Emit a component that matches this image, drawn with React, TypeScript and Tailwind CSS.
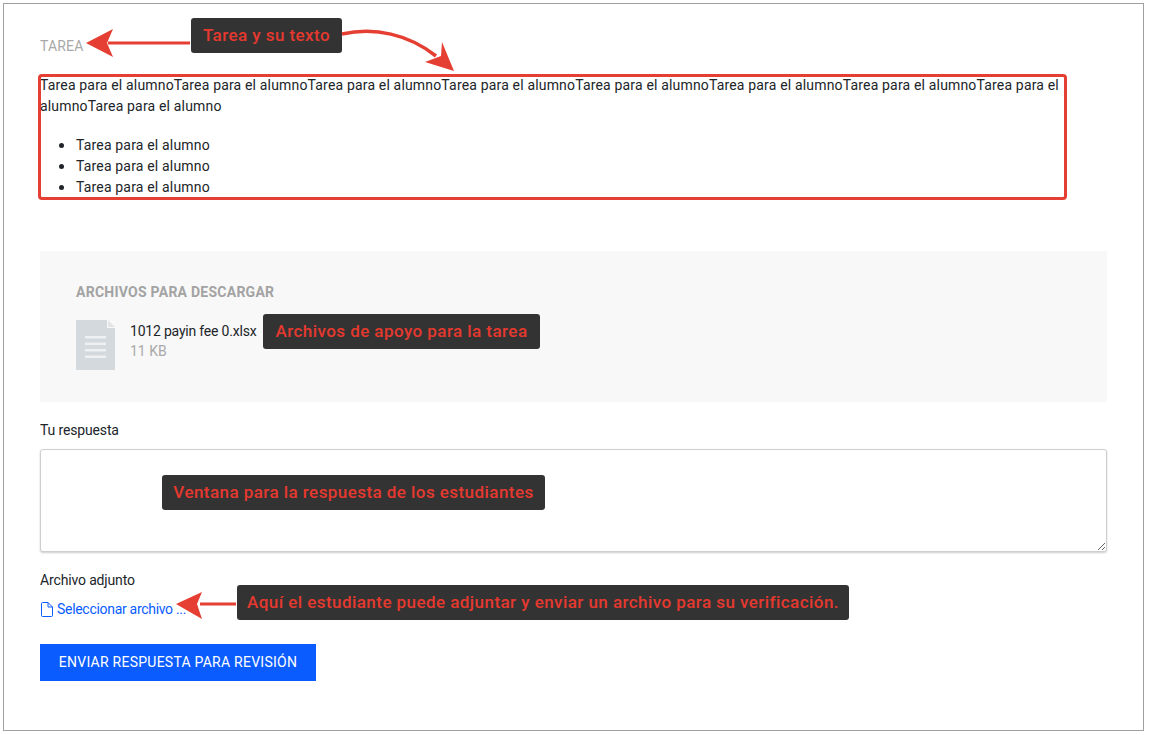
export default function App() {
  const items = ['Tarea para el alumno', 'Tarea para el alumno', 'Tarea para el alumno']

  return (
    <div className="relative h-[735px] w-[1149px] overflow-hidden bg-white pt-[3px] pl-[3px] font-['Roboto',sans-serif] text-[14px] leading-[21px] tracking-[0.17px] text-[#212529]">
      <div className="flex h-[728px] w-[1141px] flex-col border border-[#a0a0a0] px-[36px] pt-[32px]">
        {/* Tarea */}
        <div className="flex w-[1026px] flex-col gap-[18px]">
          <h4 className="text-[#a9a9a9]">TAREA</h4>
          <div className="flex flex-col gap-[18px]">
            <p>
              Tarea para el alumnoTarea para el alumnoTarea para el alumnoTarea para el alumnoTarea para el alumnoTarea para el alumnoTarea para el alumnoTarea para el alumnoTarea para el alumno
            </p>
            <ul className="list-none pl-[36px]">
              {items.map((item, i) => (
                <li key={i} className="flex items-center">
                  <span className="-ml-[17px] mr-[12px] size-[5px] rounded-full bg-[#212529]"></span>
                  {item}
                </li>
              ))}
            </ul>
          </div>
        </div>

        {/* Archivos */}
        <div className="mt-[53px] flex h-[151px] w-[1067px] flex-col gap-[17px] bg-[#f8f8f8] px-[36px] pt-[31px]">
          <h5 className="text-[14px] leading-[21px] font-bold tracking-[0.25px] text-[#a3a3a3]">ARCHIVOS PARA DESCARGAR</h5>
          <div className="flex gap-[15px]">
            <svg width="39" height="50" viewBox="0 0 39 50" className="shrink-0">
              <path d="M0 0H31V8H39V50H0Z" fill="#d4d9dd" />
              <path d="M32 0L39 7H32Z" fill="#e2e5e8" />
              <path d="M9 16H30V18.500H9ZM9 22.500H30V25H9ZM9 29H30V31.500H9ZM9 35.500H30V38H9Z" fill="#eef0f1" />
            </svg>
            <div className="flex flex-col pt-[1px] text-[14px] leading-[20px]">
              <div className="tracking-[-0.2px]">1012 payin fee 0.xlsx</div>
              <div className="tracking-[0px] text-[#a9a9a9]">11 KB</div>
            </div>
          </div>
        </div>

        {/* Respuesta */}
        <div className="mt-[18px] flex flex-col gap-[9px]">
          <label className="leading-[20px] tracking-[-0.15px]">Tu respuesta</label>
          <textarea className="h-[103px] w-[1067px] rounded-[3px] border border-[#cfcfcf] bg-white shadow-[0_1px_2px_rgba(0,0,0,0.2)] outline-none"></textarea>
        </div>

        <div className="mt-[18px] flex flex-col gap-[9px]">
          <label className="leading-[20px] tracking-[-0.15px]">Archivo adjunto</label>
          <div className="flex items-center gap-[4px] text-[#0a5cff]">
            <svg width="13" height="15" viewBox="0 0 13 15" fill="none" stroke="#0a5cff" strokeWidth="1">
              <path d="M1.500 1.500C1.500 1 1.800 .5 2.300 .5H8L12.500 5V13.500C12.500 14 12.200 14.500 11.700 14.500H2.300C1.800 14.500 1.500 14 1.500 13.500Z" />
              <path d="M8 .5V5H12.500" />
            </svg>
            <a className="leading-[20px] tracking-[-0.3px]">Seleccionar archivo ...</a>
          </div>
        </div>

        <button className="mt-[25px] h-[37px] w-[276px] bg-[#0a5cff] text-[14px] font-normal tracking-[0.25px] text-white">
          ENVIAR RESPUESTA PARA REVISIÓN
        </button>
      </div>

      {/* Anotaciones */}
      <div className="absolute top-[74px] left-[38px] h-[126px] w-[1029px] rounded-[4px] border-[3px] border-[#e53f33]"></div>
      <Note className="top-[18px] left-[191px] h-[35px] w-[151px]">Tarea y su texto</Note>
      <Note className="top-[314px] left-[263px] h-[35px] w-[277px]">Archivos de apoyo para la tarea</Note>
      <Note className="top-[475px] left-[162px] h-[35px] w-[383px]">Ventana para la respuesta de los estudiantes</Note>
      <Note className="top-[585px] left-[237px] h-[35px] w-[612px]">Aquí el estudiante puede adjuntar y enviar un archivo para su verificación.</Note>

      <svg className="pointer-events-none absolute top-0 left-0" width="1149" height="735" fill="none">
        <path d="M190 43H108" stroke="#e53f33" strokeWidth="3" />
        <path d="M86 43L113 29L107 43L113 57Z" fill="#e53f33" />
        <path d="M342 34C375 27 408 34 436 56" stroke="#e53f33" strokeWidth="3.500" />
        <path d="M454 71L425 62L441 56L442 42Z" fill="#e53f33" />
        <path d="M236 604H200" stroke="#e53f33" strokeWidth="3" />
        <path d="M176 604L202 592L197 604L202 619Z" fill="#e53f33" />
      </svg>
    </div>
  )
}

function Note({ className, children }: { className: string; children: React.ReactNode }) {
  return (
    <div className={`absolute flex items-center justify-center rounded-[3px] bg-[#333333] text-[17px] font-medium tracking-[0.44px] whitespace-nowrap text-[#e5392f] ${className}`}>
      {children}
    </div>
  )
}
